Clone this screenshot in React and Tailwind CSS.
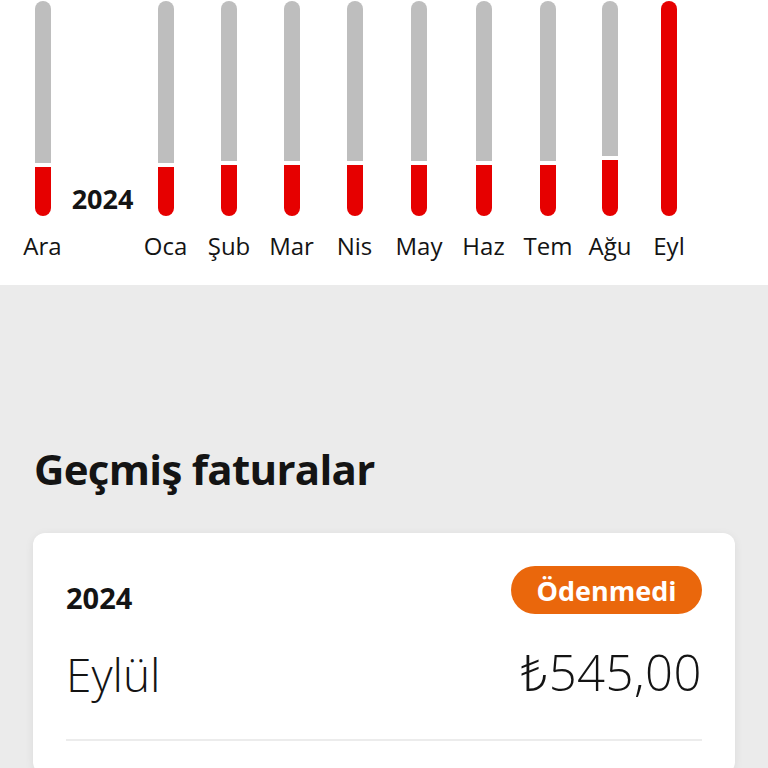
import React from 'react';

const months = [
    {label: 'Ara', w: 'w-[59px]', red: 49},
    {year: '2024', w: 'w-[62px]'},
    {label: 'Oca', w: 'w-[63px]', red: 49},
    {label: 'Şub', w: 'w-[64px]', red: 51},
    {label: 'Mar', w: 'w-[61px]', red: 51},
    {label: 'Nis', w: 'w-[65px]', red: 51},
    {label: 'May', w: 'w-[64px]', red: 51},
    {label: 'Haz', w: 'w-[65px]', red: 51},
    {label: 'Tem', w: 'w-[64px]', red: 51},
    {label: 'Ağu', w: 'w-[60px]', red: 56},
    {label: 'Eyl', w: 'w-[58px]', full: true},
];

function Bar({red, full}) {
    if (full) {
        return <div className="h-[215px] w-4 rounded-full bg-[#e60000]"></div>;
    }
    return (
        <div className="h-[215px] w-4 flex flex-col gap-[4px]">
            <div className="flex-1 rounded-t-full bg-[#bebebe]"></div>
            <div className="rounded-b-full bg-[#e60000]" style={{height: red}}></div>
        </div>
    );
}

function Invoice({year, month, amount, status}) {
    return (
        <div>
            <div className="flex justify-between items-end">
                <span className="text-[29px] font-bold leading-none pb-[2px]">{year}</span>
                <span className="h-[48px] w-[191px] rounded-full bg-[#ea670c] text-white text-[27px] font-bold leading-none flex items-center justify-center">
                    {status}
                </span>
            </div>
            <div className="flex justify-between items-end mt-[34px] font-light leading-none">
                <span className="text-[46px]">{month}</span>
                <span className="text-[49px] tracking-[0.5px]">₺{amount}</span>
            </div>
            <div className="mt-[42px] h-[2px] bg-[#ececec]"></div>
        </div>
    );
}

export default function App() {
    return (
        <div className="min-h-screen bg-[#ebebeb] font-['Open_Sans','Noto_Sans',sans-serif] text-[#141414]">
            <section className="h-[285px] bg-white pt-[1px]">
                <div className="flex pl-[13px]">
                    {months.map((m, i) => (
                        <div key={i} className={`${m.w} flex flex-col items-center`}>
                            {m.year ? (
                                <div className="h-[215px] flex items-end pb-[4px] pr-[1px]">
                                    <span className="text-[27px] font-bold leading-none">{m.year}</span>
                                </div>
                            ) : (
                                <>
                                    <Bar red={m.red} full={m.full}/>
                                    <span className="mt-[18px] text-[24px] leading-none whitespace-nowrap">{m.label}</span>
                                </>
                            )}
                        </div>
                    ))}
                </div>
            </section>
            <section className="px-[33px] pt-[163px]">
                <h2 className="text-[42px] font-bold leading-none pl-[1px] tracking-[-0.7px]">Geçmiş faturalar</h2>
                <div className="mt-[43px] rounded-xl bg-white shadow-[0_2px_10px_rgba(0,0,0,0.07)] px-[33px] pt-[33px] pb-[33px]">
                    <Invoice year="2024" month="Eylül" amount="545,00" status="Ödenmedi"/>
                </div>
            </section>
        </div>
    );
}
